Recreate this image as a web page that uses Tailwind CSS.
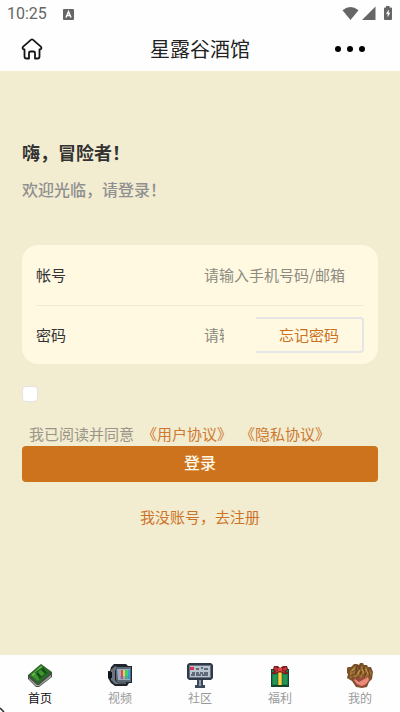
<!DOCTYPE html>
<html lang="zh-CN">
<head>
<meta charset="utf-8">
<meta name="viewport" content="width=device-width, initial-scale=1">
<title>星露谷酒馆</title>
<script src="https://cdn.jsdelivr.net/npm/@tailwindcss/browser@4"></script>
</head>
<body class="relative flex min-h-screen flex-col bg-[#f2ecd0] font-['Noto_Sans_CJK_SC',sans-serif] text-base leading-6 text-[#333]">
<header class="bg-[#fefefe]">
  <div class="flex h-7 items-center justify-between pr-2 pl-[7px] text-[#666]">
    <div class="flex items-center gap-4">
      <span class="font-[Roboto,sans-serif] text-base">10:25</span>
      <svg class="size-[11px]" viewBox="0 0 11 11" aria-hidden="true"><rect width="11" height="11" rx="1" fill="#666"/><path d="M3 8.5 5.5 2.5 8 8.5M4 6.5H7" fill="none" stroke="#fff" stroke-width="1.4"/></svg>
    </div>
    <svg class="h-4 w-[50px]" viewBox="0 0 50 16" aria-hidden="true"><g fill="#666"><path d="M.5 4.200Q8.500-2 16.500 4.200L8.500 14Z"/><path d="M33.500 .5V14H20Z"/><path d="M44 0h3.500v1.500h1.500q1 0 1 1V13q0 1-1 1h-6q-1 0-1-1V2.500q0-1 1-1h1z"/></g><path d="m46.700 3.500-2.700 4.300h1.600v3.500l2.700-4.500h-1.600z" fill="#fff"/></svg>
  </div>
  <div class="grid h-[43px] grid-cols-3 items-center px-5 pb-0.5">
    <a href="#" aria-label="首页">
      <svg class="size-6" viewBox="0 0 24 24" fill="none" stroke="#151515" stroke-width="1.800" stroke-linejoin="round" stroke-linecap="round"><path d="M11.200 2.600Q12 2 12.800 2.600L20.800 9.600Q22.300 11.800 20 12.500H19.500V19.500Q19.500 21.500 17.500 21.500H15V16Q15 14.500 13.500 14.500H10.500Q9 14.500 9 16V21.500H6.500Q4.500 21.500 4.500 19.500V12.500H4Q1.700 11.800 3.200 9.600Z"/></svg>
    </a>
    <h1 class="text-center text-xl whitespace-nowrap text-[#222]">星露谷酒馆</h1>
    <button type="button" aria-label="更多" class="mr-[15px] flex items-center gap-1.5 justify-self-end"><span class="size-1.5 rounded-full bg-black"></span><span class="size-1.5 rounded-full bg-black"></span><span class="size-1.5 rounded-full bg-black"></span></button>
  </div>
</header>

<main class="flex-1 px-[22px] pt-[68px]">
  <h2 class="text-lg leading-[26px] font-bold">嗨，冒险者！</h2>
  <p class="mt-3 font-medium text-[#909090]">欢迎光临，请登录！</p>

  <form class="mt-11 text-[15px]">
    <div class="rounded-2xl bg-[#fff9e2] px-[14px]">
      <div class="flex h-[61px] items-center border-b border-[#f3ecd5]">
        <label for="account" class="w-[168px] shrink-0">帐号</label>
        <input id="account" type="text" placeholder="请输入手机号码/邮箱" class="min-w-0 flex-1 bg-transparent outline-none placeholder:text-[#8d8b80]">
      </div>
      <div class="flex h-[58px] items-center">
        <label for="password" class="w-[168px] shrink-0">密码</label>
        <input id="password" type="password" placeholder="请输入密码" class="mr-8 w-5 min-w-0 flex-1 bg-transparent outline-none placeholder:text-[#8d8b80]">
        <button type="button" class="h-9 w-[108px] shrink-0 rounded-r border-2 border-l-0 border-[#e5e5e5] text-[#cb701d]">忘记密码</button>
      </div>
    </div>
    <input id="agree" type="checkbox" class="mt-[22px] block size-4 appearance-none rounded-sm border border-[#e3e3e3] bg-white checked:bg-[#cd721d]">
    <div class="mt-5 flex gap-2 pl-[7px] whitespace-nowrap text-[#999588]">
      <label for="agree">我已阅读并同意</label>
      <a href="#" class="text-[#cd7930]">《用户协议》</a>
      <a href="#" class="text-[#cd7930]">《隐私协议》</a>
    </div>
    <button type="submit" class="block h-9 w-full rounded bg-[#cd721d] pb-1 text-base font-medium text-[#fff9e8]">登录</button>
  </form>
  <p class="mt-[22px] text-center"><a href="#" class="text-[15px] text-[#cb7429]">我没账号，去注册</a></p>
</main>

<nav class="grid h-[57px] grid-cols-5 bg-[#fefefe] pt-2 text-xs leading-[18px] text-[#999]">
  <a href="#" class="flex flex-col items-center gap-px text-[#111]" aria-current="page">
    <svg class="h-[25px] w-[26px]" viewBox="0 0 26 25"><path d="M14 1 25 9v5L12 24H9L1 16v-4Z" fill="#465045"/><path d="m2 15 8 7h2l12-10v2L12 23H9l-7-7Z" fill="#a5ada3"/><path d="M14 1.500 24 9 11 20 2 12Z" fill="#247321"/><path d="m13 4 8 5-10 9-6-5Z" fill="#3f962d"/><path d="m4 12 10-9 2 1-10 9Z" fill="#68b544"/><path d="m9 11 2-2 4 5-2 2zm5-4 2-2 4 4-2 2z" fill="#174c1b"/><path d="m8 10 9-6m-5 12 9-7" stroke="#1c5d20" stroke-width="1.300"/></svg>
    首页
  </a>
  <a href="#" class="flex flex-col items-center gap-px">
    <svg class="h-[25px] w-[26px]" viewBox="0 0 26 25"><path d="M7 1h12l2 2h4v17h-3l-2 3H8l-4-3-3-5V8h2l1-4Z" fill="#20232b"/><path d="m8 3 2 1-2 4v9l3 4H8l-4-4V7Z" fill="#69747d"/><path d="M1 9h4v6H1z" fill="#10151b"/><path d="M10 4h14v15H10L9 16V7Z" fill="#576773"/><path d="M10 6h13v11H11Z" fill="#9eaabc"/><path d="M12 7h3v9h-3z" fill="#a6abc2"/><path d="M14 7h3v9h-3z" fill="#df4568"/><path d="M16 7h2v9h-2z" fill="#d9d85d"/><path d="M18 7h3v9h-3z" fill="#41ce70"/><path d="M21 7h2v9h-2z" fill="#38a3d0"/><path d="M13 13h9v3h-9z" fill="#5f6bd0" opacity=".35"/><path d="M10 20h9" stroke="#87919a"/></svg>
    视频
  </a>
  <a href="#" class="flex flex-col items-center gap-px">
    <svg class="h-[25px] w-[26px]" viewBox="0 0 26 25"><path d="M2 0h22l2 2v13l-2 2H2l-2-2V2Z" fill="#2f3947"/><path d="M2 2h22v13H2z" fill="#65717f"/><path d="M3 3h20v11H3z" fill="#bac3cd"/><path d="M3 4h4v3H3z" fill="#d9344e"/><path d="M9 6h3m2-1h2m1 1h4M5 10h3m1 0h3m1 0h3m1 0h4M4 12h4m1 0h5m1 0h6" stroke="#424e5e" stroke-width="1.300"/><path d="M10 17h6v5h2v3H8v-3h2Z" fill="#3c4b59"/><path d="M12 17h2v6h-2z" fill="#8c9ba7"/></svg>
    社区
  </a>
  <a href="#" class="flex flex-col items-center gap-px">
    <svg class="h-[25px] w-[26px]" viewBox="0 0 26 25"><path d="M4 6h18v18H4z" fill="#17442c"/><path d="M5 7h16v15H5z" fill="#168047"/><path d="M6 12h4v9H6zm10 0h4v9h-4z" fill="#259556"/><path d="M11 9h4v13h-4z" fill="#d8a32c"/><path d="M12 10h2v12h-2z" fill="#f2d64b"/><path d="M7 3h4l2 2 3-2h4l1 3-2 3h2v2h-4l-4-2-4 2H5V9h2L6 6Z" fill="#74201f"/><path d="m8 4 4 2-3 2-2-2Zm11 0-4 2 3 2 2-2ZM9 8l4-1 4 1 1 2-5-2-5 2Z" fill="#c9343c"/><path d="M11 5h4v3h-4z" fill="#df4745"/></svg>
    福利
  </a>
  <a href="#" class="flex flex-col items-center gap-px">
    <svg class="h-[25px] w-[26px]" viewBox="0 0 26 25"><path d="M7 1h3l2 1 1-2h3l1 2h3l1 2h3l2 5-1 7-3 3-2 5-5 1-6-1-4-6-5-3 1-4-3-3 3-4h3Z" fill="#79502a"/><path d="m6 14 5 2 2-4 10 2-2 6-4 4h-5l-5-4Z" fill="#99493e"/><path d="m8 16 4 3 9-5 1 3-3 4-4 2-5-2-3-4Z" fill="#e98b78"/><path d="m3 8 5-5 3 2 3-2 7 2 4 5-2 4-2-2-2 4-3-5-2 5-2-4-4 3-2-2-3 3Z" fill="#a17334"/><path d="m5 9 5-5-2 8 5-9v9l4-8 1 9 3-7 2 7M4 13l3-2" stroke="#694322" stroke-width="1.200" fill="none"/><path d="m5 8 3-3m3 6 2-4m4 3-2-4m6 5-2-5" stroke="#c4934c" stroke-width="1.200"/></svg>
    我的
  </a>
</nav>
<svg class="absolute bottom-0 left-0 size-[5px]" viewBox="0 0 5 5" aria-hidden="true"><path d="m0 1 4 4" stroke="#222" stroke-width="1.500"/></svg>
</body>
</html>
